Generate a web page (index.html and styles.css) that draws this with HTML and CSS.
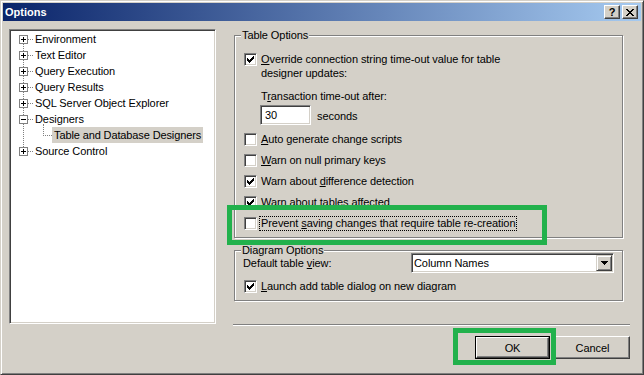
FILE: index.html
```html
<!DOCTYPE html>
<html>
<head>
<meta charset="utf-8">
<title>Options</title>
<link rel="stylesheet" href="styles.css">
</head>
<body>
<div class="window">
  <div class="titlebar">
    <span class="title">Options</span>
    <div class="tb-buttons">
      <span class="tb-btn help">?</span>
      <span class="tb-btn close"><svg width="8" height="7" viewBox="0 0 8 7" shape-rendering="crispEdges"><path d="M0 0h2v1h-2zM6 0h2v1h-2zM1 1h2v1h-2zM5 1h2v1h-2zM2 2h4v1h-4zM3 3h2v1h-2zM2 4h4v1h-4zM1 5h2v1h-2zM5 5h2v1h-2zM0 6h2v1h-2zM6 6h2v1h-2z" fill="#000"/></svg></span>
    </div>
  </div>
  <div class="content">
    <div class="tree">
      <ul class="tree-list">
        <li class="node"><span class="toggle plus"></span><span class="conn"></span><span class="label">Environment</span></li>
        <li class="node"><span class="toggle plus"></span><span class="conn"></span><span class="label">Text Editor</span></li>
        <li class="node"><span class="toggle plus"></span><span class="conn"></span><span class="label">Query Execution</span></li>
        <li class="node"><span class="toggle plus"></span><span class="conn"></span><span class="label">Query Results</span></li>
        <li class="node"><span class="toggle plus"></span><span class="conn"></span><span class="label">SQL Server Object Explorer</span></li>
        <li class="node"><span class="toggle minus"></span><span class="conn"></span><span class="label">Designers</span></li>
        <li class="node child"><span class="child-conn"></span><span class="label selected">Table and Database Designers</span></li>
        <li class="node"><span class="toggle plus"></span><span class="conn"></span><span class="label">Source Control</span></li>
      </ul>
    </div>
    <div class="pane">
      <div class="group table-opts">
        <span class="legend">Table Options</span>
        <div class="multi-row">
          <span class="cb checked"><svg width="7" height="7" viewBox="0 0 7 7" shape-rendering="crispEdges"><path d="M6 0h1v3h-1v1h-1v1h-1v1h-1v1h-1v-1h-1v-1h-1v-3h1v1h1v1h1v-1h1v-1h1z" fill="#000"/></svg></span>
          <span class="multi-label"><u>O</u>verride connection string time-out value for table<br>designer updates:</span>
        </div>
        <div class="indent sub-label">T<u>r</u>ansaction time-out after:</div>
        <div class="indent input-row">
          <span class="textbox">30</span>
          <span class="unit">seconds</span>
        </div>
        <div class="check-row"><span class="cb"></span><span class="cl"><u>A</u>uto generate change scripts</span></div>
        <div class="check-row"><span class="cb"></span><span class="cl"><u>W</u>arn on null primary keys</span></div>
        <div class="check-row"><span class="cb checked"><svg width="7" height="7" viewBox="0 0 7 7" shape-rendering="crispEdges"><path d="M6 0h1v3h-1v1h-1v1h-1v1h-1v1h-1v-1h-1v-1h-1v-3h1v1h1v1h1v-1h1v-1h1z" fill="#000"/></svg></span><span class="cl">Warn about <u>d</u>ifference detection</span></div>
        <div class="check-row"><span class="cb checked"><svg width="7" height="7" viewBox="0 0 7 7" shape-rendering="crispEdges"><path d="M6 0h1v3h-1v1h-1v1h-1v1h-1v1h-1v-1h-1v-1h-1v-3h1v1h1v1h1v-1h1v-1h1z" fill="#000"/></svg></span><span class="cl">Warn about tables affected</span></div>
        <div class="check-row"><span class="cb"></span><span class="cl focused">Prevent <u>s</u>aving changes that require table re-creation</span></div>
      </div>
      <div class="group diagram-opts">
        <span class="legend">Diagram Options</span>
        <div class="combo-row">
          <span class="combo-label">Default table <u>v</u>iew:</span>
          <div class="combo">
            <span class="combo-text">Column Names</span>
            <span class="combo-btn"><svg width="7" height="4" viewBox="0 0 7 4" shape-rendering="crispEdges"><path d="M0 0h7v1h-1v1h-1v1h-1v1h-1v-1h-1v-1h-1v-1h-1z" fill="#000"/></svg></span>
          </div>
        </div>
        <div class="check-row launch"><span class="cb checked"><svg width="7" height="7" viewBox="0 0 7 7" shape-rendering="crispEdges"><path d="M6 0h1v3h-1v1h-1v1h-1v1h-1v1h-1v-1h-1v-1h-1v-3h1v1h1v1h1v-1h1v-1h1z" fill="#000"/></svg></span><span class="cl"><u>L</u>aunch add table dialog on new diagram</span></div>
      </div>
      <div class="separator"></div>
      <div class="buttons">
        <span class="btn default"><span class="btn-inner">OK</span></span>
        <span class="btn"><span class="btn-inner">Cancel</span></span>
      </div>
    </div>
  </div>
  <div class="highlight hl-prevent"></div>
  <div class="highlight hl-ok"></div>
</div>
</body>
</html>
```
FILE: styles.css
```css
* { box-sizing: border-box; }
html, body { margin: 0; padding: 0; }
body {
  width: 644px;
  height: 375px;
  overflow: hidden;
  background: #d4d0c8;
  font-family: "Liberation Sans", Arial, sans-serif;
  font-size: 11px;
  letter-spacing: -0.08px;
  color: #000;
}
u { text-decoration: underline; text-underline-offset: 1px; }

.window {
  position: relative;
  width: 644px;
  height: 375px;
  border: 1px solid;
  border-color: #d4d0c8 #404040 #404040 #d4d0c8;
  box-shadow: inset 1px 1px 0 #fff, inset -1px -1px 0 #808080;
  padding: 2px;
  background: #d4d0c8;
}

/* title bar */
.titlebar {
  height: 18px;
  display: flex;
  align-items: center;
  justify-content: space-between;
  padding: 0 3px 0 2px;
  background: linear-gradient(to right, #0a246a, #a6caf0);
}
.title { color: #fff; font-weight: bold; font-size: 11px; letter-spacing: 0; }
.tb-buttons { display: flex; gap: 2px; }
.tb-btn {
  width: 16px;
  height: 14px;
  display: flex;
  align-items: center;
  justify-content: center;
  background: #d4d0c8;
  border: 1px solid;
  border-color: #fff #404040 #404040 #fff;
  box-shadow: inset -1px -1px 0 #808080;
  font-weight: bold;
  font-size: 11px;
  line-height: 1;
}
.tb-btn.help { padding-top: 1px; }

/* content */
.content { display: flex; align-items: flex-start; }

.tree {
  margin: 8px 0 0 6px;
  width: 207px;
  height: 295px;
  padding: 1px;
  background: #fff;
  border: 1px solid;
  border-color: #808080 #fff #fff #808080;
  box-shadow: inset 1px 1px 0 #404040, inset -1px -1px 0 #d4d0c8;
}
.tree-list { position: relative; margin: 0; padding: 0; list-style: none; }
.tree-list::before {
  content: "";
  position: absolute;
  left: 12px;
  top: 8px;
  height: 112px;
  border-left: 1px dotted #808080;
}
.node { display: flex; align-items: flex-start; height: 16px; padding-left: 8px; }
.toggle {
  position: relative;
  z-index: 1;
  margin-top: 4px;
  width: 9px;
  height: 9px;
  border: 1px solid #808080;
  background: #fff;
}
.toggle::before {
  content: "";
  position: absolute;
  left: 1px;
  top: 3px;
  width: 5px;
  height: 1px;
  background: #000;
}
.toggle.plus::after {
  content: "";
  position: absolute;
  left: 3px;
  top: 1px;
  width: 1px;
  height: 5px;
  background: #000;
}
.conn { margin-top: 8px; width: 5px; border-top: 1px dotted #808080; }
.label { padding: 0 2px; line-height: 16px; height: 16px; white-space: nowrap; }
.label.selected { background: #d4d0c8; letter-spacing: -0.12px; }
.node.child { padding-left: 32px; }
.child-conn {
  margin-top: -3px;
  width: 9px;
  height: 12px;
  border-left: 1px dotted #808080;
  border-bottom: 1px dotted #808080;
}

/* right pane */
.pane {
  margin: 7px 0 0 17px;
  width: 397px;
  display: flex;
  flex-direction: column;
}
.group {
  position: relative;
  margin-left: 1px;
  width: 389px;
  border: 1px solid #808080;
  box-shadow: inset 1px 1px 0 #fff, 1px 1px 0 #fff;
  padding: 0 8px 0 9px;
}
.legend {
  position: absolute;
  top: -7px;
  left: 6px;
  padding: 0 1px;
  line-height: 13px;
  background: #d4d0c8;
  white-space: nowrap;
}
.table-opts { margin-top: 7px; padding-top: 16px; padding-bottom: 3px; }

.multi-row { display: flex; align-items: flex-start; }
.multi-row .cb { margin-top: 1px; margin-right: 4px; }
.multi-label { line-height: 14px; }

.cb {
  flex: none;
  width: 13px;
  height: 13px;
  display: flex;
  align-items: center;
  justify-content: center;
  background: #fff;
  border: 1px solid;
  border-color: #808080 #fff #fff #808080;
  box-shadow: inset 1px 1px 0 #404040, inset -1px -1px 0 #d4d0c8;
}

.indent { margin-left: 16px; }
.sub-label { margin-top: 9px; line-height: 14px; padding-left: 1px; }
.input-row { margin-top: 2px; display: flex; align-items: center; height: 20px; }
.textbox {
  width: 51px;
  height: 20px;
  padding: 0 4px;
  display: flex;
  align-items: center;
  background: #fff;
  border: 1px solid;
  border-color: #808080 #fff #fff #808080;
  box-shadow: inset 1px 1px 0 #404040, inset -1px -1px 0 #d4d0c8;
}
.unit { margin-left: 6px; padding-top: 2px; }

.check-row { display: flex; align-items: center; height: 21px; }
.input-row + .check-row { margin-top: 4px; }
.check-row .cb { margin-right: 2px; }
.cl {
  padding: 0 1px;
  line-height: 13px;
  border: 1px solid transparent;
  white-space: nowrap;
}
.cl.focused { border: 1px dotted #000; }

.diagram-opts { margin-top: 12px; padding-top: 2px; padding-bottom: 7px; }
.combo-row { display: flex; align-items: center; height: 20px; }
.combo-label { margin-left: -1px; }
.combo {
  margin-left: auto;
  width: 203px;
  height: 20px;
  display: flex;
  align-items: center;
  justify-content: space-between;
  padding: 1px;
  background: #fff;
  border: 1px solid;
  border-color: #808080 #fff #fff #808080;
  box-shadow: inset 1px 1px 0 #404040, inset -1px -1px 0 #d4d0c8;
}
.combo-text { margin-left: 1px; }
.combo-btn {
  width: 16px;
  height: 16px;
  display: flex;
  align-items: center;
  justify-content: center;
  background: #d4d0c8;
  border: 1px solid;
  border-color: #d4d0c8 #404040 #404040 #d4d0c8;
  box-shadow: inset 1px 1px 0 #fff, inset -1px -1px 0 #808080;
}
.check-row.launch { margin-top: 6px; height: 14px; }

.separator {
  margin-top: 23px;
  height: 2px;
  border-top: 1px solid #808080;
  border-bottom: 1px solid #fff;
}
.buttons { margin-top: 10px; display: flex; justify-content: flex-end; gap: 5px; }
.btn {
  width: 75px;
  height: 23px;
  display: flex;
  background: #d4d0c8;
  border: 1px solid;
  border-color: #fff #404040 #404040 #fff;
  box-shadow: inset -1px -1px 0 #808080;
}
.btn-inner { flex: 1; display: flex; align-items: center; justify-content: center; }
.btn.default { border: 1px solid #000; box-shadow: none; }
.btn.default .btn-inner {
  border: 1px solid;
  border-color: #fff #404040 #404040 #fff;
  box-shadow: inset -1px -1px 0 #808080;
}

/* annotation rectangles */
.highlight { position: absolute; border: 5px solid #22b14c; }
.hl-prevent { left: 226px; top: 204px; width: 320px; height: 40px; }
.hl-ok { left: 452px; top: 327px; width: 103px; height: 37px; }
```
